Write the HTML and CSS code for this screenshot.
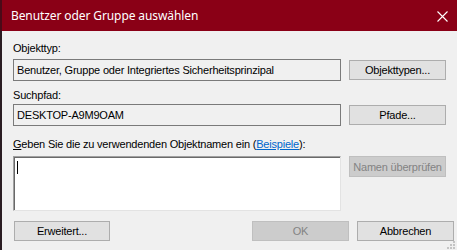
FILE: index.html
```html
<html>
    <head>
        <title>Benutzer oder Gruppe auswählen</title>
        <link rel="stylesheet" href="styles.css">
    </head>
    <body>
        <div class="edge"></div>
        <div class="window">
            <div class="titlebar">
                <span class="title">Benutzer oder Gruppe auswählen</span>
                <svg class="close" width="11" height="11" viewBox="0 0 11 11">
                    <path d="M0.5 0.5 L10.5 10.5 M10.5 0.5 L0.5 10.5" stroke="#fff" stroke-width="1.1" />
                </svg>
            </div>
            <div class="content">
                <div class="label first">Objekttyp:</div>
                <div class="row">
                    <div class="field">Benutzer, Gruppe oder Integriertes Sicherheitsprinzipal</div>
                    <button class="btn">Objekttypen...</button>
                </div>

                <div class="label second">Suchpfad:</div>
                <div class="row">
                    <div class="field">DESKTOP-A9M9OAM</div>
                    <button class="btn">Pfade...</button>
                </div>

                <div class="label third"><u>G</u>eben Sie die zu verwendenden Objektnamen ein (<a href="#">Beispiele</a>):</div>
                <div class="row top">
                    <div class="names"><span class="caret"></span></div>
                    <button class="btn tall" disabled>Namen überprüfen</button>
                </div>

                <div class="row actions">
                    <button class="btn">Erweitert...</button>
                    <div class="spacer"></div>
                    <button class="btn" disabled>OK</button>
                    <button class="btn">Abbrechen</button>
                </div>
            </div>
            <svg class="grip" width="8" height="8" viewBox="0 0 8 8">
                <rect x="6" y="0" width="2" height="2" fill="#c4c4c4" />
                <rect x="3" y="3" width="2" height="2" fill="#c4c4c4" />
                <rect x="6" y="3" width="2" height="2" fill="#c4c4c4" />
                <rect x="0" y="6" width="2" height="2" fill="#c4c4c4" />
                <rect x="3" y="6" width="2" height="2" fill="#c4c4c4" />
                <rect x="6" y="6" width="2" height="2" fill="#c4c4c4" />
            </svg>
        </div>
    </body>
</html>
```

FILE: styles.css
```css
body {
    margin: 0;
    width: 457px;
    height: 250px;
    display: flex;
    overflow: hidden;
    background: #f0f0f0;
    font-family: "Liberation Sans", Arial, sans-serif;
    font-size: 11px;
    letter-spacing: -0.2px;
    color: #000;
}

.edge {
    width: 2px;
    background: linear-gradient(#4a0a18 0, #4a0a18 31px, #2a1c22 31px);
}

.window {
    flex: 1;
    display: flex;
    flex-direction: column;
    position: relative;
}

.titlebar {
    height: 31px;
    background: #8a0016;
    display: flex;
    align-items: center;
    padding-left: 9px;
    padding-right: 9px;
}

.title {
    flex: 1;
    color: #fff;
    font-family: "Noto Sans", "Open Sans", sans-serif;
    font-size: 12px;
    letter-spacing: -0.1px;
}

.close {
    margin-top: 1px;
}

.content {
    padding-left: 11px;
    display: flex;
    flex-direction: column;
}

.label {
    line-height: 13px;
    height: 13px;
}

.first {
    margin-top: 11px;
    margin-bottom: 4px;
}

.second {
    margin-top: 8px;
    margin-bottom: 2px;
}

.third {
    margin-top: 12px;
    margin-bottom: 5px;
}

.label a {
    color: #0066cc;
}

.row {
    display: flex;
    align-items: center;
    gap: 8px;
}

.row.top {
    align-items: flex-start;
}

.field {
    width: 328px;
    height: 22px;
    box-sizing: border-box;
    border: 1px solid #7a7a7a;
    padding-left: 3px;
    line-height: 20px;
    white-space: nowrap;
    overflow: hidden;
}

.btn {
    width: 97px;
    height: 20px;
    box-sizing: border-box;
    border: 1px solid #adadad;
    background: #e1e1e1;
    font-family: "Liberation Sans", Arial, sans-serif;
    font-size: 11px;
    letter-spacing: -0.2px;
    color: #000;
    padding: 0;
}

.btn:disabled {
    background: #cccccc;
    border-color: #bfbfbf;
    color: #838383;
}

.btn.tall {
    height: 21px;
}

.names {
    width: 328px;
    height: 55px;
    box-sizing: border-box;
    background: #fff;
    border-top: 1px solid #a0a0a0;
    border-left: 1px solid #a0a0a0;
    border-right: 1px solid #e3e3e3;
    border-bottom: 1px solid #e3e3e3;
    box-shadow: inset 1px 1px 0 #696969;
    padding: 4px 0 0 3px;
}

.caret {
    display: block;
    width: 1px;
    height: 13px;
    background: #000;
}

.actions {
    margin-top: 10px;
    padding-left: 1px;
}

.actions .btn:first-child {
    width: 96px;
}

.spacer {
    width: 126px;
}

.grip {
    position: absolute;
    right: 2px;
    bottom: 1px;
}
```
